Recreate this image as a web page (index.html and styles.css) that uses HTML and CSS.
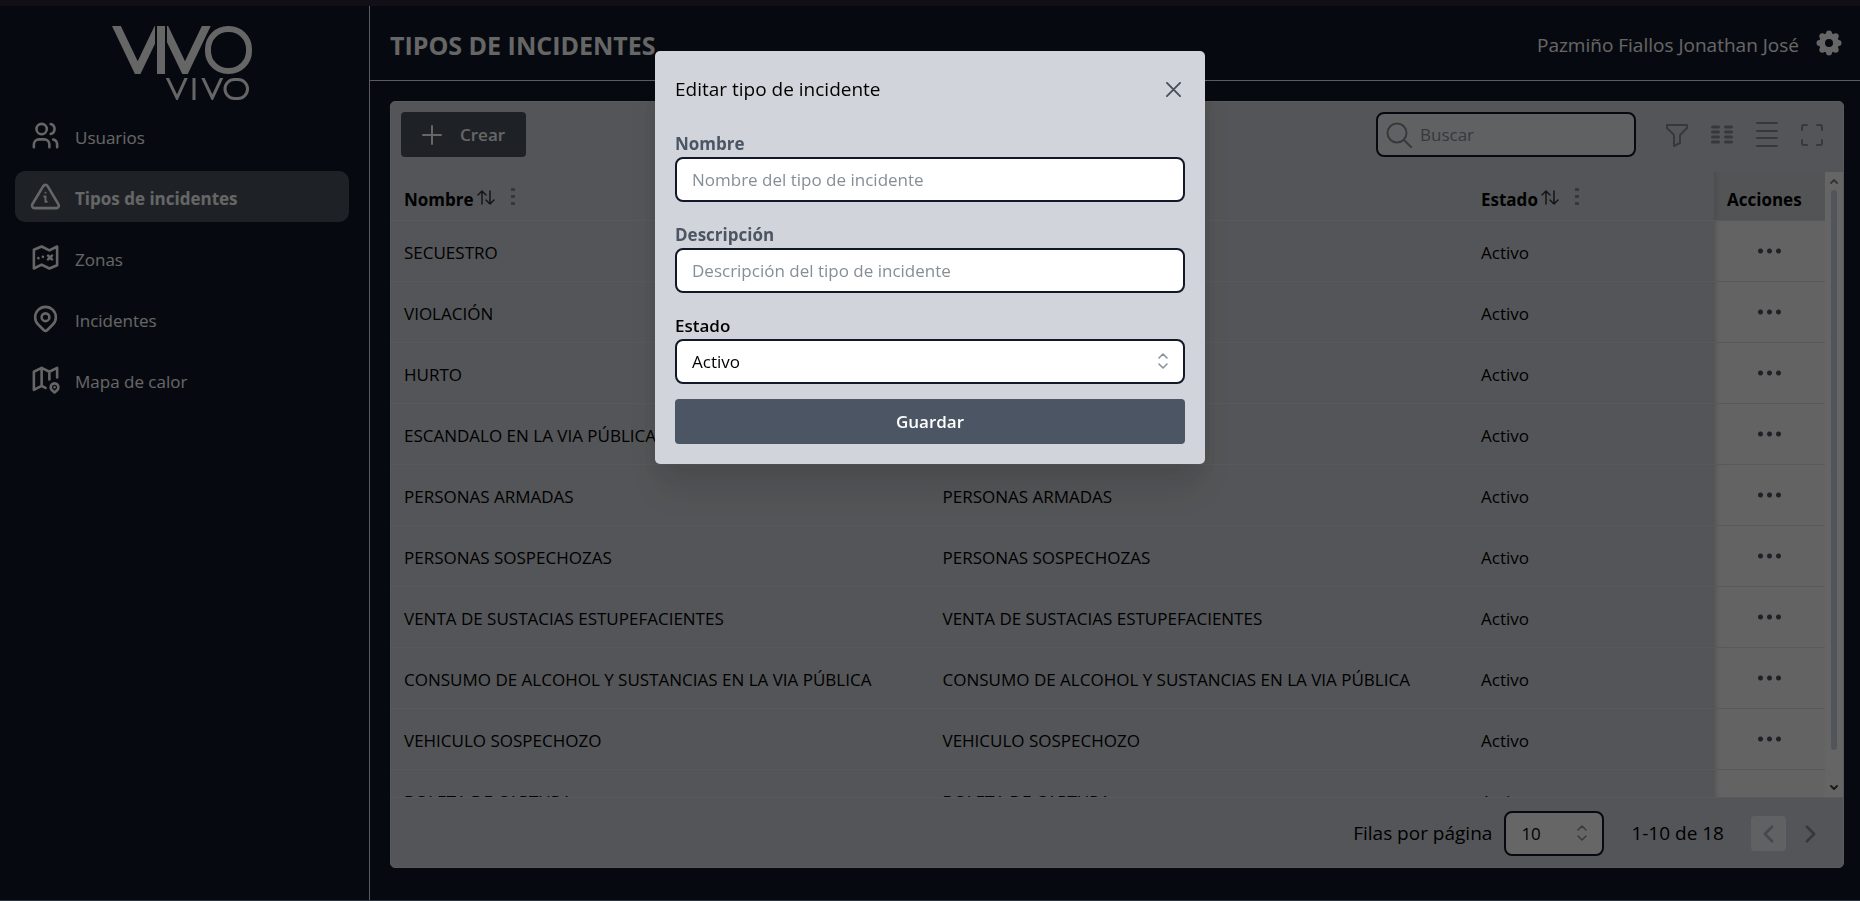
FILE: index.html
```html
<!DOCTYPE html>
<html lang="es">
<head>
<meta charset="utf-8">
<meta name="viewport" content="width=device-width, initial-scale=1">
<title>Tipos de incidentes</title>
<link rel="stylesheet" href="styles.css">
</head>
<body>
<svg class="defs" aria-hidden="true">
  <symbol id="sort" viewBox="0 0 18 16"><path d="M5 14V1M1 5l4-4 4 4M13 1v13M9 10l4 4 4-4"/></symbol>
  <symbol id="updown" viewBox="0 0 10 16"><path d="M1 5l4-4 4 4M1 11l4 4 4-4"/></symbol>
</svg>
<div class="app">
  <aside class="sidebar">
    <svg class="logo" viewBox="0 0 140 75" role="img" aria-label="Vivo Vivo">
      <g fill="none" stroke="#fff">
        <svg x="0" y="0" width="43" height="48" viewBox="0 0 43 48"><path class="sharp" stroke-width="8" d="M2 -5L25.700 44.500 49.400 -5"/></svg>
        <path class="sharp" stroke-width="8" d="M49 0V48"/>
        <svg x="55" y="0" width="44" height="48" viewBox="55 0 44 48"><path class="sharp" stroke-width="8" d="M49.300 -5L73 44.500 96.700 -5"/></svg>
        <rect x="96" y="3" width="41" height="42" rx="20" stroke-width="6"/>
        <svg x="53" y="52" width="59" height="22" viewBox="53 52 59 22"><path class="sharp" stroke-width="3" d="M54.500 50L65 72 75 50M82 50V76M90 50L100.300 72 110.500 50"/></svg>
        <rect x="113" y="53.500" width="22.500" height="19" rx="9.500" stroke-width="3"/>
      </g>
    </svg>
    <nav class="menu">
      <a href="#" class="item"><svg class="icon" viewBox="0 0 24 24"><path d="M5 7a4 4 0 1 0 8 0a4 4 0 1 0-8 0M3 21v-2a4 4 0 0 1 4-4h4a4 4 0 0 1 4 4v2M16 3.130a4 4 0 0 1 0 7.750M21 21v-2a4 4 0 0 0-3-3.850"/></svg>Usuarios</a>
      <a href="#" class="item active" aria-current="page"><svg class="icon" viewBox="0 0 24 24"><path d="M10.240 3.957l-8.422 14.060a1.989 1.989 0 0 0 1.700 2.983h16.845a1.989 1.989 0 0 0 1.700-2.983l-8.423-14.060a1.989 1.989 0 0 0-3.400 0z"/><path stroke-width="1.500" d="M12 9h.01M11 12h1v4h1"/></svg>Tipos de incidentes</a>
      <a href="#" class="item"><svg class="icon" viewBox="0 0 24 24"><path d="M3 6l6-2.500 6 3 6-3v14.500l-6 2.500-6-3-6 3zM14 10.500l3 3M17 10.500l-3 3M6.500 12.500h.01M10 11.500h.01"/></svg>Zonas</a>
      <a href="#" class="item"><svg class="icon" viewBox="0 0 24 24"><path d="M9 11a3 3 0 1 0 6 0a3 3 0 0 0-6 0M17.657 16.657l-4.243 4.243a2 2 0 0 1-2.827 0l-4.244-4.243a8 8 0 1 1 11.314 0z"/></svg>Incidentes</a>
      <a href="#" class="item"><svg class="icon" viewBox="0 0 24 24"><path d="M12 18.500L9 17l-6 3V6l6-3 6 3 6-3v7.500M9 3v14M15 6v6M21.121 20.121a3 3 0 1 0-4.242 0c.418.419 1.125 1.045 2.121 1.879 1.051-.89 1.759-1.516 2.121-1.879zM19 18v.01"/></svg>Mapa de calor</a>
    </nav>
  </aside>
  <div class="content">
    <header class="header">
      <h1>TIPOS DE INCIDENTES</h1>
      <div class="user">Pazmiño Fiallos Jonathan José
        <button class="plain" aria-label="Ajustes"><svg class="gear" viewBox="0 0 26 26"><g fill="#fff"><circle cx="13" cy="13" r="10"/><circle cx="13" cy="3.500" r="3"/><circle cx="19.700" cy="6.300" r="3"/><circle cx="22.500" cy="13" r="3"/><circle cx="19.700" cy="19.700" r="3"/><circle cx="13" cy="22.500" r="3"/><circle cx="6.300" cy="19.700" r="3"/><circle cx="3.500" cy="13" r="3"/><circle cx="6.300" cy="6.300" r="3"/></g><circle cx="13" cy="13" r="4" fill="#111827"/></svg></button>
      </div>
    </header>
    <main class="main">
      <section class="panel">
        <div class="toolbar">
          <button class="btn create"><svg class="plus" viewBox="0 0 20 20"><path d="M10 1v18M1 10h18"/></svg>Crear</button>
          <div class="tools">
            <label class="search"><svg viewBox="0 0 26 26"><circle cx="11" cy="11" r="9.500"/><path d="M18 18l7 7"/></svg><input type="search" placeholder="Buscar" aria-label="Buscar"></label>
            <button class="plain tool" aria-label="Filtros"><svg viewBox="0 0 24 24"><path d="M2 2h20v3l-7 7v8l-6 3V12L2 5z"/></svg></button>
            <button class="plain tool" aria-label="Columnas"><svg viewBox="0 0 24 24"><path class="wide" d="M2.500 4h6M2.500 9h6M2.500 14h6M2.500 19h6M15.500 4h6M15.500 9h6M15.500 14h6M15.500 19h6"/></svg></button>
            <button class="plain tool" aria-label="Densidad"><svg viewBox="0 0 24 24"><path d="M2 0h20M2 8h20M2 15h20M2 23h20"/></svg></button>
            <button class="plain tool" aria-label="Pantalla completa"><svg viewBox="0 0 24 24"><path d="M2 7V4a2 2 0 0 1 2-2h3M17 2h3a2 2 0 0 1 2 2v3M22 17v3a2 2 0 0 1-2 2h-3M7 22H4a2 2 0 0 1-2-2v-3"/></svg></button>
          </div>
        </div>
        <div class="grid">
          <div class="viewport">
            <table>
              <colgroup><col><col><col class="c-state"><col class="c-actions"></colgroup>
              <thead><tr>
                <th scope="col">Nombre<svg class="sort"><use href="#sort"/></svg><i class="dots"></i></th>
                <th scope="col">Descripción<svg class="sort"><use href="#sort"/></svg><i class="dots"></i></th>
                <th scope="col">Estado<svg class="sort"><use href="#sort"/></svg><i class="dots"></i></th>
                <th scope="col" class="act">Acciones</th>
              </tr></thead>
              <tbody>
                <tr><td>SECUESTRO</td><td>SECUESTRO</td><td>Activo</td><td class="act"><button class="plain more" aria-label="Acciones"></button></td></tr>
                <tr><td>VIOLACIÓN</td><td>VIOLACIÓN</td><td>Activo</td><td class="act"><button class="plain more" aria-label="Acciones"></button></td></tr>
                <tr><td>HURTO</td><td>HURTO</td><td>Activo</td><td class="act"><button class="plain more" aria-label="Acciones"></button></td></tr>
                <tr><td>ESCANDALO EN LA VIA PÚBLICA</td><td>ESCANDALO EN LA VIA PÚBLICA</td><td>Activo</td><td class="act"><button class="plain more" aria-label="Acciones"></button></td></tr>
                <tr><td>PERSONAS ARMADAS</td><td>PERSONAS ARMADAS</td><td>Activo</td><td class="act"><button class="plain more" aria-label="Acciones"></button></td></tr>
                <tr><td>PERSONAS SOSPECHOZAS</td><td>PERSONAS SOSPECHOZAS</td><td>Activo</td><td class="act"><button class="plain more" aria-label="Acciones"></button></td></tr>
                <tr><td>VENTA DE SUSTACIAS ESTUPEFACIENTES</td><td>VENTA DE SUSTACIAS ESTUPEFACIENTES</td><td>Activo</td><td class="act"><button class="plain more" aria-label="Acciones"></button></td></tr>
                <tr><td>CONSUMO DE ALCOHOL Y SUSTANCIAS EN LA VIA PÚBLICA</td><td>CONSUMO DE ALCOHOL Y SUSTANCIAS EN LA VIA PÚBLICA</td><td>Activo</td><td class="act"><button class="plain more" aria-label="Acciones"></button></td></tr>
                <tr><td>VEHICULO SOSPECHOZO</td><td>VEHICULO SOSPECHOZO</td><td>Activo</td><td class="act"><button class="plain more" aria-label="Acciones"></button></td></tr>
                <tr><td>BOLETA DE CAPTURA</td><td>BOLETA DE CAPTURA</td><td>Activo</td><td class="act"><button class="plain more" aria-label="Acciones"></button></td></tr>
              </tbody>
            </table>
          </div>
          <div class="scrollbar" aria-hidden="true">
            <svg viewBox="0 0 8 6"><path d="M1 5l3-3 3 3" stroke="#888"/></svg>
            <div class="track"><div class="thumb"></div></div>
            <svg viewBox="0 0 8 6"><path d="M1 1l3 3 3-3" stroke="#444"/></svg>
          </div>
        </div>
        <footer class="pager">
          <label for="rows">Filas por página</label>
          <span class="select rows"><select id="rows"><option>10</option><option>20</option></select><svg><use href="#updown"/></svg></span>
          <span class="range">1-10 de 18</span>
          <div class="pages">
            <button class="plain page" disabled aria-label="Anterior"><svg viewBox="0 0 12 20"><path d="M10 2l-8 8 8 8"/></svg></button>
            <button class="plain page" aria-label="Siguiente"><svg viewBox="0 0 12 20"><path d="M2 2l8 8-8 8"/></svg></button>
          </div>
        </footer>
      </section>
    </main>
  </div>
</div>
<div class="overlay">
  <form class="modal" role="dialog" aria-labelledby="modal-title">
    <div class="modal-head">
      <h2 id="modal-title">Editar tipo de incidente</h2>
      <button type="button" class="plain close" aria-label="Cerrar"><svg viewBox="0 0 16 16"><path d="M1 1l14 14M15 1L1 15"/></svg></button>
    </div>
    <div class="field">
      <label for="name">Nombre</label>
      <input id="name" type="text" placeholder="Nombre del tipo de incidente">
    </div>
    <div class="field">
      <label for="desc">Descripción</label>
      <input id="desc" type="text" placeholder="Descripción del tipo de incidente">
    </div>
    <div class="field">
      <label for="state" class="dark">Estado</label>
      <span class="select"><select id="state"><option>Activo</option><option>Inactivo</option></select><svg><use href="#updown"/></svg></span>
    </div>
    <button type="button" class="btn save">Guardar</button>
  </form>
</div>
</body>
</html>
```

FILE: styles.css
```css
* { box-sizing: border-box; }
body {
  margin: 0;
  height: 100vh;
  overflow: hidden;
  background: #111827;
  color: #000;
  font: 17px/27px "Open Sans", "Noto Sans", sans-serif;
}
button, input, select { font: inherit; color: inherit; }
svg { fill: none; flex: none; }
path { stroke-linecap: round; stroke-linejoin: round; }
.sharp { stroke-linecap: butt; stroke-linejoin: miter; }
.defs { position: absolute; width: 0; height: 0; }
.plain { border: 0; padding: 0; background: none; display: flex; align-items: center; justify-content: center; }

.app {
  display: flex;
  height: 100vh;
  border-top: 6px solid #2d2638;
  border-bottom: 1px solid #6b7f9c;
}

/* Sidebar */
.sidebar {
  width: 370px;
  flex: none;
  border-right: 1px solid #e5e7eb;
  padding: 20px 20px 20px 15px;
  color: #fff;
}
.logo { display: block; width: 140px; height: 75px; margin: 0 auto 9px 97px; }
.menu { display: flex; flex-direction: column; gap: 10px; }
.item {
  display: flex;
  align-items: center;
  gap: 14px;
  height: 51px;
  padding: 3px 15px 0;
  border-radius: 10px;
  color: #fff;
  text-decoration: none;
}
.item.active { background: #4b5563; font-weight: 700; }
.icon { width: 31px; height: 31px; margin-bottom: 4px; stroke: #fff; stroke-width: 2; }

/* Header */
.content { flex: 1; min-width: 0; display: flex; flex-direction: column; }
.header {
  display: flex;
  align-items: center;
  justify-content: space-between;
  height: 75px;
  flex: none;
  padding: 4px 18px 0 20px;
  border-bottom: 1px solid #e5e7eb;
  color: #fff;
}
h1 { margin: 0; font-size: 25px; line-height: 32px; font-weight: 700; }
.user { display: flex; align-items: center; gap: 17px; font-size: 19px; }
.gear { width: 26px; height: 26px; margin-bottom: 4px; }

/* Table panel */
.main { flex: 1; min-height: 0; display: flex; padding: 20px 16px 32px 20px; }
.panel {
  flex: 1;
  min-width: 0;
  display: flex;
  flex-direction: column;
  background: #d1d5db;
  border: 1px solid #dee2e6;
  border-radius: 5px;
  overflow: hidden;
}
.toolbar { display: flex; justify-content: space-between; padding: 10px 14px 15px 10px; }
.btn {
  height: 45px;
  border: 0;
  border-radius: 4px;
  background: #4b5563;
  color: #fff;
  font-weight: 600;
}
.create { display: flex; align-items: center; gap: 18px; padding: 0 21px; }
.plus { width: 20px; height: 20px; stroke: #fff; stroke-width: 2; }
.tools { display: flex; align-items: center; gap: 10px; }
.search {
  display: flex;
  align-items: center;
  gap: 8px;
  width: 260px;
  height: 45px;
  margin-right: 13px;
  padding: 0 8px;
  border: 2px solid #111827;
  border-radius: 8px;
  background: #f1f3f5;
}
.search svg { width: 26px; height: 26px; stroke: #868e96; stroke-width: 2; }
.search input { min-width: 0; flex: 1; padding: 0; border: 0; background: none; outline: 0; }
.search input::placeholder { color: #868e96; opacity: 1; }
.tool { width: 35px; height: 35px; }
.tool svg { width: 24px; height: 24px; stroke: #868e96; stroke-width: 2; overflow: visible; }
.tool .wide { stroke-width: 3; }

.grid { flex: 1; min-height: 0; display: flex; }
.viewport { flex: 1; min-width: 0; overflow: hidden; }
table { width: 100%; table-layout: fixed; border-collapse: separate; border-spacing: 0; }
.c-state { width: 246px; }
.c-actions { width: 111px; }
th, td { padding: 2px 13px 0; border-bottom: 1px solid #dbdee3; text-align: left; white-space: nowrap; }
th { height: 49px; padding-top: 6px; font-weight: 700; }
td { height: 61px; }
.act { background: #f8f8f8; box-shadow: inset 6px 0 6px -6px #b0b0b0; }
th.act { background: #cfd1d4; }
.sort { width: 18px; height: 16px; margin: 0 16px 0 3px; stroke: #333; stroke-width: 1.5; }
.dots { display: inline-block; width: 4px; height: 20px; background: radial-gradient(circle, #868e96 2px, transparent 2px) 0 0 / 4px 7px; }
.more { margin: 0 auto 2px; width: 27px; height: 6px; background: radial-gradient(circle, #4b5563 2px, transparent 3px) 0 0 / 9px 6px; }
.scrollbar {
  width: 18px;
  flex: none;
  display: flex;
  flex-direction: column;
  align-items: center;
  padding: 6px 0;
  background: #fcfcfc;
}
.scrollbar svg { width: 8px; height: 6px; stroke-width: 2; }
.track { flex: 1; padding: 6px 0 35px; display: flex; }
.thumb { width: 6px; border-radius: 3px; background: #cbd5e0; }

.pager {
  display: flex;
  align-items: center;
  justify-content: flex-end;
  height: 70px;
  flex: none;
  padding: 2px 15px 0 0;
  border-top: 1px solid #dee2e6;
  font-size: 19px;
}
.rows { width: 100px; margin: 0 27px 0 12px; font-size: 17px; }
.pages { display: flex; gap: 7px; margin-left: 27px; }
.page { width: 35px; height: 35px; border-radius: 4px; }
.page svg { width: 11px; height: 18px; stroke: #868e96; stroke-width: 3; }
.page:disabled { background: #f1f3f5; }
.page:disabled svg { stroke: #adb5bd; }

/* Modal */
.overlay {
  position: fixed;
  inset: 0;
  display: flex;
  align-items: flex-start;
  justify-content: center;
  padding-top: 51px;
  background: rgba(0, 0, 0, .6);
}
.modal {
  width: 550px;
  padding: 20px;
  border-radius: 5px;
  background: #d1d5db;
  box-shadow: 0 30px 40px rgba(0, 0, 0, .1), 0 12px 24px rgba(0, 0, 0, .06);
}
.modal-head { display: flex; align-items: center; justify-content: space-between; height: 36px; margin-bottom: 23px; }
h2 { margin: 0; font-size: 19px; line-height: 27px; font-weight: 400; }
.close { width: 24px; height: 24px; }
.close svg { width: 15px; height: 15px; stroke: #495057; stroke-width: 2; }
.field { display: flex; flex-direction: column; margin-bottom: 19px; }
.field label { color: #4b5563; font-weight: 700; }
.field .dark { color: #000; font-weight: 600; }
.field > input, .select select {
  width: 100%;
  height: 45px;
  padding: 0 15px;
  border: 2px solid #111827;
  border-radius: 8px;
  background: #fff;
}
.field > input::placeholder { color: #868e96; opacity: 1; }
.select { display: block; position: relative; }
.select select { appearance: none; display: block; }
.select svg { position: absolute; right: 17px; top: 14px; width: 10px; height: 16px; stroke: #868e96; stroke-width: 1.5; pointer-events: none; }
.field:last-of-type { margin-bottom: 15px; }
.save { display: block; width: 100%; }
```
